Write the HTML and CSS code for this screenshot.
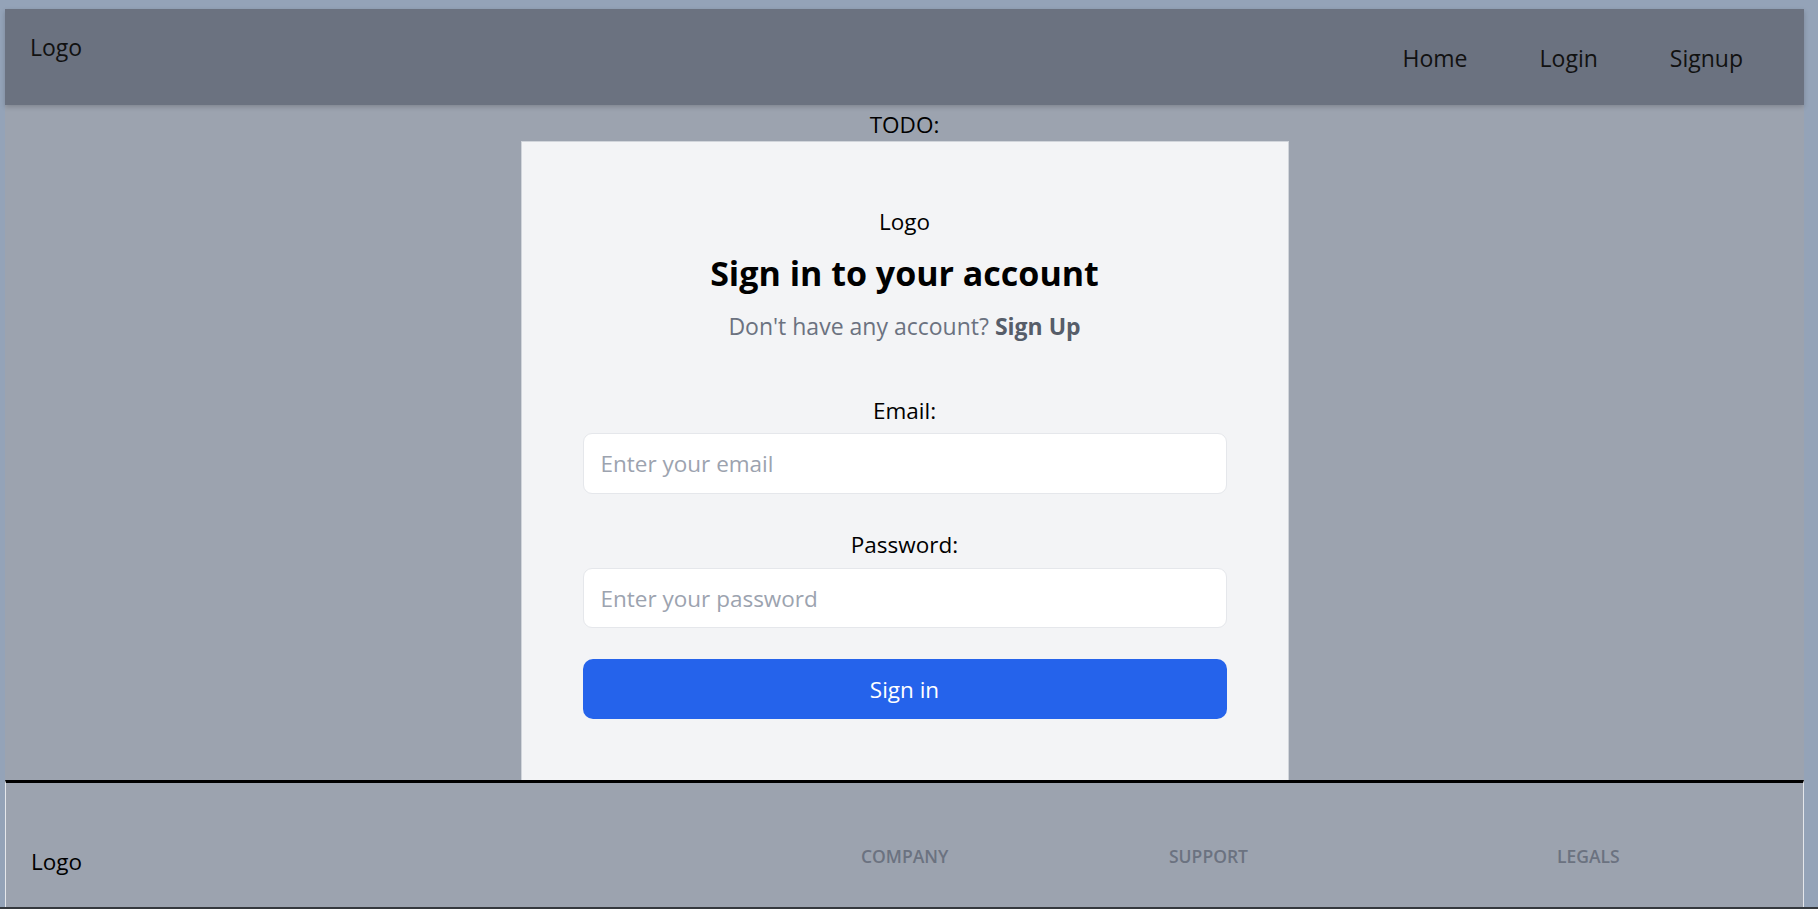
FILE: index.html
```html
<!DOCTYPE html>
<html lang="en">
<head>
<meta charset="utf-8">
<title>Sign in</title>
<link rel="stylesheet" href="styles.css">
</head>
<body>
<div class="page">
  <header class="topbar">
    <div class="brand">Logo</div>
    <nav class="nav">
      <a href="#">Home</a>
      <a href="#">Login</a>
      <a href="#">Signup</a>
    </nav>
  </header>
  <main class="main">
    <p class="todo">TODO:</p>
    <section class="card">
      <div class="card-logo">Logo</div>
      <h1 class="title">Sign in to your account</h1>
      <p class="sub">Don't have any account? <a href="#">Sign Up</a></p>
      <form class="form">
        <label class="label" for="email">Email:</label>
        <input class="field field-email" id="email" type="email" placeholder="Enter your email">
        <label class="label label-pw" for="pw">Password:</label>
        <input class="field field-pw" id="pw" type="password" placeholder="Enter your password">
        <button class="btn" type="button">Sign in</button>
      </form>
    </section>
  </main>
  <footer class="footer">
    <div class="footer-logo">Logo</div>
    <div class="footer-col">COMPANY</div>
    <div class="footer-col">SUPPORT</div>
    <div class="footer-col">LEGALS</div>
  </footer>
</div>
<div class="bottom-bar"></div>
</body>
</html>
```
FILE: styles.css
```css
html, body {
  margin: 0;
  padding: 0;
  overflow: hidden;
}
body {
  background: #94a3b8;
  font-family: "Open Sans", "Noto Sans", sans-serif;
  font-size: 22.5px;
  line-height: 33px;
  color: #111;
}
.page {
  padding: 9px 14px 0 5px;
}
.topbar {
  height: 96px;
  box-sizing: border-box;
  background: #6b7280;
  display: flex;
  justify-content: space-between;
  padding: 0 61px 0 25px;
  box-shadow: 0 2px 5px rgba(0, 0, 0, 0.18);
  position: relative;
  z-index: 1;
  font-size: 23px;
}
.brand {
  padding-top: 22px;
}
.nav {
  display: flex;
  gap: 72px;
  padding-top: 33px;
}
.nav a {
  color: #111;
  text-decoration: none;
}
.main {
  height: 675px;
  background: #9ca3af;
  display: flex;
  flex-direction: column;
  align-items: center;
}
.todo {
  margin: 3px 0 0;
  color: #000;
}
.card {
  flex: 1;
  width: 768px;
  box-sizing: border-box;
  background: #f3f4f6;
  border: 1px solid #d1d5db;
  border-bottom: none;
  padding: 63px 61px 0;
  text-align: center;
}
.card-logo {
  color: #000;
}
.title {
  margin: 15px 0 0;
  font-size: 34px;
  line-height: 40px;
  font-weight: 700;
  color: #000;
}
.sub {
  margin: 17px 0 0;
  font-size: 23px;
  color: #6b7280;
}
.sub a {
  color: #565d69;
  font-weight: 700;
  text-decoration: none;
}
.form {
  margin-top: 51px;
  display: flex;
  flex-direction: column;
}
.label {
  color: #000;
}
.label-pw {
  margin-top: 34px;
}
.field {
  box-sizing: border-box;
  width: 100%;
  background: #fff;
  border: 1px solid #e5e7eb;
  border-radius: 9px;
  padding: 0 17px;
  font-family: inherit;
  font-size: 22.5px;
  color: #111;
  outline: none;
}
.field::placeholder {
  color: #9ca3af;
}
.field-email {
  margin-top: 6px;
  height: 61px;
}
.field-pw {
  margin-top: 7px;
  height: 60px;
}
.btn {
  margin-top: 31px;
  height: 60px;
  border: none;
  border-radius: 10px;
  background: #2563eb;
  color: #fff;
  font-family: inherit;
  font-size: 22.5px;
  line-height: 33px;
  cursor: pointer;
}
.footer {
  height: 127px;
  box-sizing: border-box;
  background: #9ca3af;
  border-top: 3px solid #000;
  border-left: 1px solid #e5e7eb;
  border-right: 1px solid #e5e7eb;
  padding: 61px 0 0 25px;
  display: grid;
  grid-template-columns: 830px 308px 388px 1fr;
  align-items: start;
}
.footer-logo {
  margin-top: 1px;
  color: #000;
}
.footer-col {
  font-size: 17.5px;
  line-height: 24px;
  font-weight: 600;
  color: #6b7280;
}
.bottom-bar {
  height: 2px;
  background: #34383d;
}
```
